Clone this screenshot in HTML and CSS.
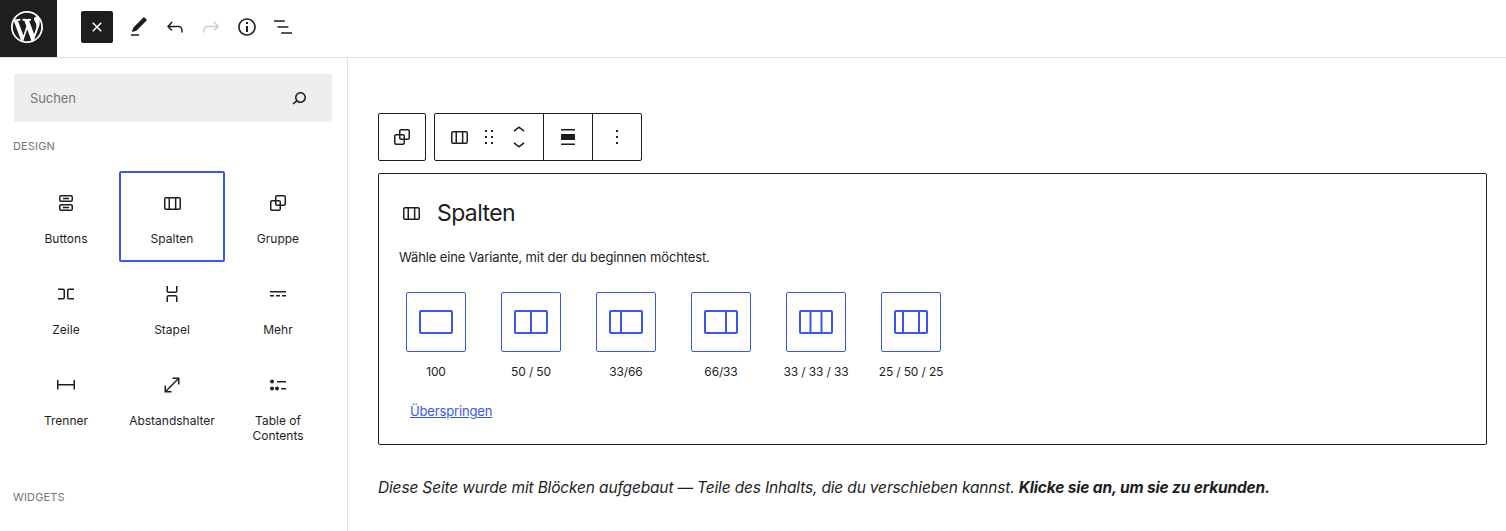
FILE: index.html
```html
<!DOCTYPE html>
<html lang="de">
<head>
<meta charset="utf-8">
<title>Spalten</title>
<link rel="stylesheet" href="styles.css">
</head>
<body>
<header class="topbar">
  <a class="wp-logo"><svg viewBox="0 0 20 20" width="32" height="32"><path fill="#fff" d="M20 10c0-5.51-4.49-10-10-10C4.48 0 0 4.49 0 10c0 5.52 4.48 10 10 10 5.51 0 10-4.48 10-10zM7.78 15.37L4.37 6.22c.55-.02 1.17-.08 1.17-.08.5-.06.44-1.13-.06-1.11 0 0-1.45.11-2.37.11-.18 0-.37 0-.58-.01C4.12 2.69 6.87 1.11 10 1.11c2.33 0 4.45.87 6.05 2.34-.68-.11-1.65.39-1.65 1.58 0 .74.45 1.36.9 2.1.35.61.55 1.36.55 2.46 0 1.49-1.4 5-1.4 5l-3.03-8.37c.54-.02.82-.17.82-.17.5-.05.44-1.25-.06-1.22 0 0-1.44.12-2.38.12-.87 0-2.33-.12-2.33-.12-.5-.03-.56 1.2-.06 1.22l.92.08 1.26 3.41zM17.41 10c.24-.64.74-1.87.43-4.25.7 1.29 1.05 2.71 1.05 4.25 0 3.29-1.73 6.24-4.4 7.78.97-2.59 1.94-5.2 2.92-7.78zM6.1 18.09C3.12 16.65 1.11 13.53 1.11 10c0-1.3.23-2.48.72-3.59C3.25 10.3 4.67 14.2 6.1 18.09zm4.03-6.63l2.58 6.98c-.86.29-1.76.45-2.71.45-.79 0-1.57-.11-2.29-.33.81-2.38 1.62-4.74 2.42-7.1z"/></svg></a>
  <div class="tools">
    <button class="tool-close"><svg class="ico" viewBox="0 0 24 24"><path fill="#fff" d="M12 13.06l3.712 3.713 1.061-1.06L13.061 12l3.712-3.712-1.06-1.06L12 10.938 8.288 7.227l-1.061 1.06L10.939 12l-3.712 3.712 1.06 1.061L12 13.061z"/></svg></button>
    <svg class="ico tool-first" viewBox="0 0 24 24"><path d="M20.1 5.1L16.9 2 6.2 12.7l-1.3 4.4 4.5-1.3L20.1 5.1zM4 20.8h8v-1.5H4v1.5z"/></svg>
    <svg class="ico" viewBox="0 0 24 24"><path d="M18.3 11.7c-.6-.6-1.4-.9-2.3-.9H6.7l2.9-3.3-1.1-1-4.5 5L8.5 16l1-1-2.7-2.7H16c.5 0 .9.2 1.3.5 1 1 1 3.4 1 4.5v.3h1.5v-.2c0-1.5 0-4.3-1.5-5.7z"/></svg>
    <svg class="ico ico-off" viewBox="0 0 24 24"><path d="M15.6 6.5l-1.1 1 2.9 3.3H8c-.9 0-1.7.3-2.3.9-1.4 1.5-1.4 4.2-1.4 5.6v.2h1.5v-.3c0-1.1 0-3.5 1-4.5.3-.3.7-.5 1.3-.5h9.2L14.5 15l1.1 1.1 4.6-4.6-4.6-5z"/></svg>
    <svg class="ico" viewBox="0 0 24 24"><path d="M12 3.2c-4.8 0-8.8 3.9-8.8 8.8 0 4.8 3.9 8.8 8.8 8.8 4.8 0 8.8-3.9 8.8-8.8 0-4.8-4-8.8-8.8-8.8zm0 16c-4 0-7.2-3.3-7.2-7.2C4.8 8 8 4.8 12 4.8s7.2 3.3 7.2 7.2c0 4-3.2 7.2-7.2 7.2zM11 17h2v-6h-2v6zm0-8h2V7h-2v2z"/></svg>
    <svg class="ico" viewBox="0 0 24 24"><path d="M13.8 5.2H3v1.5h10.8V5.2zm-3.6 12v1.5H21v-1.5H10.2zm7.2-6H6.6v1.5h10.8v-1.5z"/></svg>
  </div>
</header>
<div class="workspace">
  <aside class="sidebar">
    <div class="search">
      <span class="search-text">Suchen</span>
      <svg class="ico" viewBox="0 0 24 24"><path d="M13.5 6C10.5 6 8 8.5 8 11.5c0 1.1.3 2.1.9 3l-3.4 3 1 1.1 3.4-2.9c1 .9 2.2 1.4 3.6 1.4 3 0 5.5-2.5 5.5-5.5C19 8.5 16.5 6 13.5 6zm0 9.5c-2.2 0-4-1.8-4-4s1.8-4 4-4 4 1.8 4 4-1.8 4-4 4z"/></svg>
    </div>
    <h2 class="section-label">Design</h2>
    <div class="block-grid">
      <div class="block-item">
        <svg class="ico" viewBox="0 0 24 24"><path fill-rule="evenodd" d="M7 4h10a2 2 0 0 1 2 2v3a2 2 0 0 1-2 2H7a2 2 0 0 1-2-2V6a2 2 0 0 1 2-2zm0 1.5a.5.5 0 0 0-.5.5v3a.5.5 0 0 0 .5.5h10a.5.5 0 0 0 .5-.5V6a.5.5 0 0 0-.5-.5H7zM7 13h10a2 2 0 0 1 2 2v3a2 2 0 0 1-2 2H7a2 2 0 0 1-2-2v-3a2 2 0 0 1 2-2zm0 1.5a.5.5 0 0 0-.5.5v3a.5.5 0 0 0 .5.5h10a.5.5 0 0 0 .5-.5v-3a.5.5 0 0 0-.5-.5H7zM9 6.75h6v1.5H9zM9 15.75h6v1.5H9z"/></svg>
        <span>Buttons</span>
      </div>
      <div class="block-item is-active">
        <svg class="ico" viewBox="0 0 24 24"><path d="M19 6H6c-1.1 0-2 .9-2 2v9c0 1.1.9 2 2 2h13c1.1 0 2-.9 2-2V8c0-1.1-.9-2-2-2zm-4.1 1.5v10H10v-10h4.9zM5.5 17V8c0-.3.2-.5.5-.5h2.5v10H6c-.3 0-.5-.2-.5-.5zm14 0c0 .3-.2.5-.5.5h-2.6v-10H19c.3 0 .5.2.5.5v9z"/></svg>
        <span>Spalten</span>
      </div>
      <div class="block-item">
        <svg class="ico" viewBox="0 0 24 24"><path d="M18 4h-7c-1.1 0-2 .9-2 2v3H6c-1.1 0-2 .9-2 2v7c0 1.1.9 2 2 2h7c1.1 0 2-.9 2-2v-3h3c1.1 0 2-.9 2-2V6c0-1.1-.9-2-2-2zm-4.5 14c0 .3-.2.5-.5.5H6c-.3 0-.5-.2-.5-.5v-7c0-.3.2-.5.5-.5h3V13c0 1.1.9 2 2 2h2.5v3zm0-4.5H11c-.3 0-.5-.2-.5-.5v-2.5H13c.3 0 .5.2.5.5v2.5zm5-.5c0 .3-.2.5-.5.5h-3V11c0-1.1-.9-2-2-2h-2.5V6c0-.3.2-.5.5-.5h7c.3 0 .5.2.5.5v7z"/></svg>
        <span>Gruppe</span>
      </div>
      <div class="block-item">
        <svg class="ico" viewBox="0 0 24 24"><path d="M4 6.5h5a2 2 0 0 1 2 2v7a2 2 0 0 1-2 2H4V16h5a.5.5 0 0 0 .5-.5v-7A.5.5 0 0 0 9 8H4V6.5Zm16 0h-5a2 2 0 0 0-2 2v7a2 2 0 0 0 2 2h5V16h-5a.5.5 0 0 1-.5-.5v-7A.5.5 0 0 1 15 8h5V6.5Z"/></svg>
        <span>Zeile</span>
      </div>
      <div class="block-item">
        <svg class="ico" viewBox="0 0 24 24"><path d="M17.5 4v5a2 2 0 0 1-2 2h-7a2 2 0 0 1-2-2V4H8v5a.5.5 0 0 0 .5.5h7A.5.5 0 0 0 16 9V4h1.5Zm0 16v-5a2 2 0 0 0-2-2h-7a2 2 0 0 0-2 2v5H8v-5a.5.5 0 0 1 .5-.5h7a.5.5 0 0 1 .5.5v5h1.5Z"/></svg>
        <span>Stapel</span>
      </div>
      <div class="block-item">
        <svg class="ico" viewBox="0 0 24 24"><path d="M4 9v1.5h16V9H4zm12 5.5h4V13h-4v1.5zm-6 0h4V13h-4v1.5zm-6 0h4V13H4v1.5z"/></svg>
        <span>Mehr</span>
      </div>
      <div class="block-item">
        <svg class="ico" viewBox="0 0 24 24"><path d="M4.5 12.5v4H3V7h1.5v3.987h15V7H21v9.5h-1.5v-4h-15Z"/></svg>
        <span>Trenner</span>
      </div>
      <div class="block-item">
        <svg class="ico" viewBox="0 0 24 24"><path d="M7 18h4.5v1.5h-7v-7H6V17L17 6h-4.5V4.5h7v7H18V7L7 18Z"/></svg>
        <span>Abstandshalter</span>
      </div>
      <div class="block-item">
        <svg class="ico" viewBox="0 0 24 24"><path d="M20 9.484h-8.889v-1.5H20v1.5Zm0 7h-4.889v-1.5H20v1.5Zm-14 .032a1 1 0 1 0 0-2 1 1 0 0 0 0 2Zm0 1a2 2 0 1 0 0-4 2 2 0 0 0 0 4Z"/><path d="M13 15.516a2 2 0 1 1-4 0 2 2 0 0 1 4 0ZM8 8.484a2 2 0 1 1-4 0 2 2 0 0 1 4 0Z"/></svg>
        <span>Table of Contents</span>
      </div>
    </div>
    <h2 class="section-label section-label-next">Widgets</h2>
  </aside>
  <main class="canvas">
    <div class="block-toolbar">
      <div class="tb-group"><div class="tb-cell tb-switch"><svg class="ico" viewBox="0 0 24 24"><path d="M18 4h-7c-1.1 0-2 .9-2 2v3H6c-1.1 0-2 .9-2 2v7c0 1.1.9 2 2 2h7c1.1 0 2-.9 2-2v-3h3c1.1 0 2-.9 2-2V6c0-1.1-.9-2-2-2zm-4.5 14c0 .3-.2.5-.5.5H6c-.3 0-.5-.2-.5-.5v-7c0-.3.2-.5.5-.5h3V13c0 1.1.9 2 2 2h2.5v3zm0-4.5H11c-.3 0-.5-.2-.5-.5v-2.5H13c.3 0 .5.2.5.5v2.5zm5-.5c0 .3-.2.5-.5.5h-3V11c0-1.1-.9-2-2-2h-2.5V6c0-.3.2-.5.5-.5h7c.3 0 .5.2.5.5v7z"/></svg></div></div>
      <div class="tb-group">
        <div class="tb-cell tb-block">
          <svg class="ico" viewBox="0 0 24 24"><path d="M19 6H6c-1.1 0-2 .9-2 2v9c0 1.1.9 2 2 2h13c1.1 0 2-.9 2-2V8c0-1.1-.9-2-2-2zm-4.1 1.5v10H10v-10h4.9zM5.5 17V8c0-.3.2-.5.5-.5h2.5v10H6c-.3 0-.5-.2-.5-.5zm14 0c0 .3-.2.5-.5.5h-2.6v-10H19c.3 0 .5.2.5.5v9z"/></svg>
          <svg class="ico" viewBox="0 0 24 24"><path d="M8 7h2V5H8v2zm0 6h2v-2H8v2zm0 6h2v-2H8v2zm6-14v2h2V5h-2zm0 8h2v-2h-2v2zm0 6h2v-2h-2v2z"/></svg>
          <svg class="ico-mover" viewBox="0 0 24 32"><path transform="translate(0 -2.8)" d="M6.5 12.4L12 8l5.5 4.4-.9 1.2L12 10l-4.5 3.6-1-1.2z"/><path transform="translate(0 10.8)" d="M17.5 11.6L12 16l-5.5-4.4.9-1.2L12 14l4.5-3.6 1 1.2z"/></svg>
        </div>
        <div class="tb-cell tb-align"><svg class="ico" viewBox="0 0 24 24"><path d="M5 4h14v1.5H5zM5 9h14v6H5zM5 18.5h14V20H5z"/></svg></div>
        <div class="tb-cell tb-more"><svg class="ico" viewBox="0 0 24 24"><path d="M13 19h-2v-2h2v2zm0-6h-2v-2h2v2zm0-6h-2V5h2v2z"/></svg></div>
      </div>
    </div>
    <section class="placeholder">
      <div class="ph-title">
        <svg class="ico" viewBox="0 0 24 24"><path d="M19 6H6c-1.1 0-2 .9-2 2v9c0 1.1.9 2 2 2h13c1.1 0 2-.9 2-2V8c0-1.1-.9-2-2-2zm-4.1 1.5v10H10v-10h4.9zM5.5 17V8c0-.3.2-.5.5-.5h2.5v10H6c-.3 0-.5-.2-.5-.5zm14 0c0 .3-.2.5-.5.5h-2.6v-10H19c.3 0 .5.2.5.5v9z"/></svg>
        <span>Spalten</span>
      </div>
      <p class="ph-instructions">Wähle eine Variante, mit der du beginnen möchtest.</p>
      <ul class="variations">
        <li class="variation"><div class="tile"><svg viewBox="0 0 48 48" width="48" height="48"><path fill-rule="evenodd" d="M9 12h30a2 2 0 0 1 2 2v20a2 2 0 0 1-2 2H9a2 2 0 0 1-2-2V14a2 2 0 0 1 2-2zm0 2v20h30V14H9z"/></svg></div><span>100</span></li>
        <li class="variation"><div class="tile"><svg viewBox="0 0 48 48" width="48" height="48"><path fill-rule="evenodd" d="M9 12h30a2 2 0 0 1 2 2v20a2 2 0 0 1-2 2H9a2 2 0 0 1-2-2V14a2 2 0 0 1 2-2zm0 2v20h14V14H9zm16 0v20h14V14H25z"/></svg></div><span>50 / 50</span></li>
        <li class="variation"><div class="tile"><svg viewBox="0 0 48 48" width="48" height="48"><path fill-rule="evenodd" d="M9 12h30a2 2 0 0 1 2 2v20a2 2 0 0 1-2 2H9a2 2 0 0 1-2-2V14a2 2 0 0 1 2-2zm0 2v20h9V14H9zm11 0v20h19V14H20z"/></svg></div><span>33/66</span></li>
        <li class="variation"><div class="tile"><svg viewBox="0 0 48 48" width="48" height="48"><path fill-rule="evenodd" d="M9 12h30a2 2 0 0 1 2 2v20a2 2 0 0 1-2 2H9a2 2 0 0 1-2-2V14a2 2 0 0 1 2-2zm0 2v20h19V14H9zm21 0v20h9V14h-9z"/></svg></div><span>66/33</span></li>
        <li class="variation"><div class="tile"><svg viewBox="0 0 48 48" width="48" height="48"><path fill-rule="evenodd" d="M9 12h30a2 2 0 0 1 2 2v20a2 2 0 0 1-2 2H9a2 2 0 0 1-2-2V14a2 2 0 0 1 2-2zm0 2v20h8.5V14H9zm10.5 0v20h9V14h-9zm11 0v20H39V14h-8.5z"/></svg></div><span>33 / 33 / 33</span></li>
        <li class="variation"><div class="tile"><svg viewBox="0 0 48 48" width="48" height="48"><path fill-rule="evenodd" d="M9 12h30a2 2 0 0 1 2 2v20a2 2 0 0 1-2 2H9a2 2 0 0 1-2-2V14a2 2 0 0 1 2-2zm0 2v20h6V14H9zm8 0v20h14V14H17zm16 0v20h6V14h-6z"/></svg></div><span>25 / 50 / 25</span></li>
      </ul>
      <a class="skip" href="#">Überspringen</a>
    </section>
    <p class="intro">Diese Seite wurde mit Blöcken aufgebaut — Teile des Inhalts, die du verschieben kannst. <strong>Klicke sie an, um sie zu erkunden.</strong></p>
  </main>
</div>
</body>
</html>
```
FILE: styles.css
```css
* { box-sizing: border-box; }
html, body { height: 100%; }
body {
  margin: 0;
  height: 531px;
  overflow: hidden;
  background: #fff;
  color: #1e1e1e;
  font-family: Inter, "Liberation Sans", sans-serif;
  font-size: 13px;
  line-height: 1.2;
}
svg { display: block; flex: none; fill: #1e1e1e; }
.ico { width: 24px; height: 24px; }
.ico-off { fill: #cccccc; }

.topbar {
  display: flex;
  align-items: flex-start;
  height: 58px;
  border-bottom: 1px solid #e0e0e0;
}
.wp-logo {
  display: flex;
  flex: none;
  width: 57px;
  height: 57px;
  padding: 11px 0 0 11px;
  background: #1e1e1e;
}
.tools {
  display: flex;
  align-items: center;
  gap: 12px;
  margin: 11px 0 0 24px;
}
.tool-close {
  display: flex;
  align-items: center;
  justify-content: center;
  width: 32px;
  height: 32px;
  padding: 0;
  border: 0;
  border-radius: 2px;
  background: #1e1e1e;
}
.tool-first { margin-left: 2px; }

.workspace { display: flex; height: 473px; }
.sidebar {
  width: 348px;
  flex: none;
  padding: 16px 0 0 13px;
  border-right: 1px solid #e0e0e0;
  overflow: hidden;
}
.search {
  display: flex;
  align-items: center;
  justify-content: space-between;
  width: 318px;
  height: 48px;
  margin-left: 1px;
  padding: 1px 21px 0 16px;
  border-radius: 2px;
  background: #eeeeee;
}
.search-text { color: #757575; font-size: 13px; letter-spacing: -.1px; }
.search .ico { margin-top: -1px; }
.section-label {
  margin: 17px 0 18px;
  color: #757575;
  font-size: 11px;
  font-weight: 400;
  line-height: 14px;
  letter-spacing: .15px;
  text-transform: uppercase;
}
.section-label-next { margin-top: 46px; }
.block-grid {
  display: grid;
  grid-template-columns: repeat(3, 106px);
  grid-auto-rows: 91px;
}
.block-item {
  display: flex;
  flex-direction: column;
  align-items: center;
  gap: 16px;
  padding: 20px 8px 0;
  border: 2px solid transparent;
  border-radius: 2px;
  font-size: 12px;
  text-align: center;
  line-height: 15px;
}
.block-item .ico { margin-top: -2px; }
.block-item.is-active { border-color: #3858e9; }

.canvas { flex: 1; min-width: 0; padding: 55px 19px 0 30px; }
.block-toolbar { display: flex; gap: 8px; height: 48px; }
.tb-group {
  display: flex;
  height: 48px;
  border: 1px solid #1e1e1e;
  border-radius: 2px;
}
.tb-cell { display: flex; align-items: center; justify-content: center; }
.tb-switch { width: 46px; }
.tb-block {
  justify-content: flex-start;
  width: 109px;
  gap: 6px;
  padding-left: 12px;
  border-right: 1px solid #1e1e1e;
}
.ico-mover { width: 24px; height: 32px; }
.tb-align { width: 49px; border-right: 1px solid #1e1e1e; }
.tb-more { width: 48px; }

.placeholder {
  height: 272px;
  margin-top: 12px;
  padding: 26px 20px 0;
  border: 1px solid #1e1e1e;
  border-radius: 2px;
}
.ph-title {
  display: flex;
  align-items: center;
  gap: 14px;
  height: 26px;
  font-size: 23px;
  letter-spacing: -.6px;
  line-height: 26px;
}
.ph-instructions { margin: 22px 0 0; font-size: 13px; letter-spacing: -.12px; line-height: 18px; }
.variations { display: flex; gap: 35px; margin: 26px 0 0 7px; padding: 0; list-style: none; }
.variation {
  display: flex;
  flex-direction: column;
  align-items: center;
  width: 60px;
  white-space: nowrap;
}
.tile {
  display: flex;
  align-items: center;
  justify-content: center;
  width: 60px;
  height: 60px;
  border: 1px solid #3858e9;
  border-radius: 2px;
}
.tile svg { fill: #3858e9; }
.variation span { margin-top: 12px; font-size: 12px; letter-spacing: -.15px; line-height: 16px; }
.skip {
  display: inline-block;
  margin: 23px 0 0 11px;
  color: #3858e9;
  font-size: 13px;
  letter-spacing: -.15px;
  line-height: 16px;
}
.intro { margin: 33px 0 0; font-size: 15.5px; font-style: italic; letter-spacing: -.16px; line-height: 20px; }
.intro strong { font-weight: 700; }
```
